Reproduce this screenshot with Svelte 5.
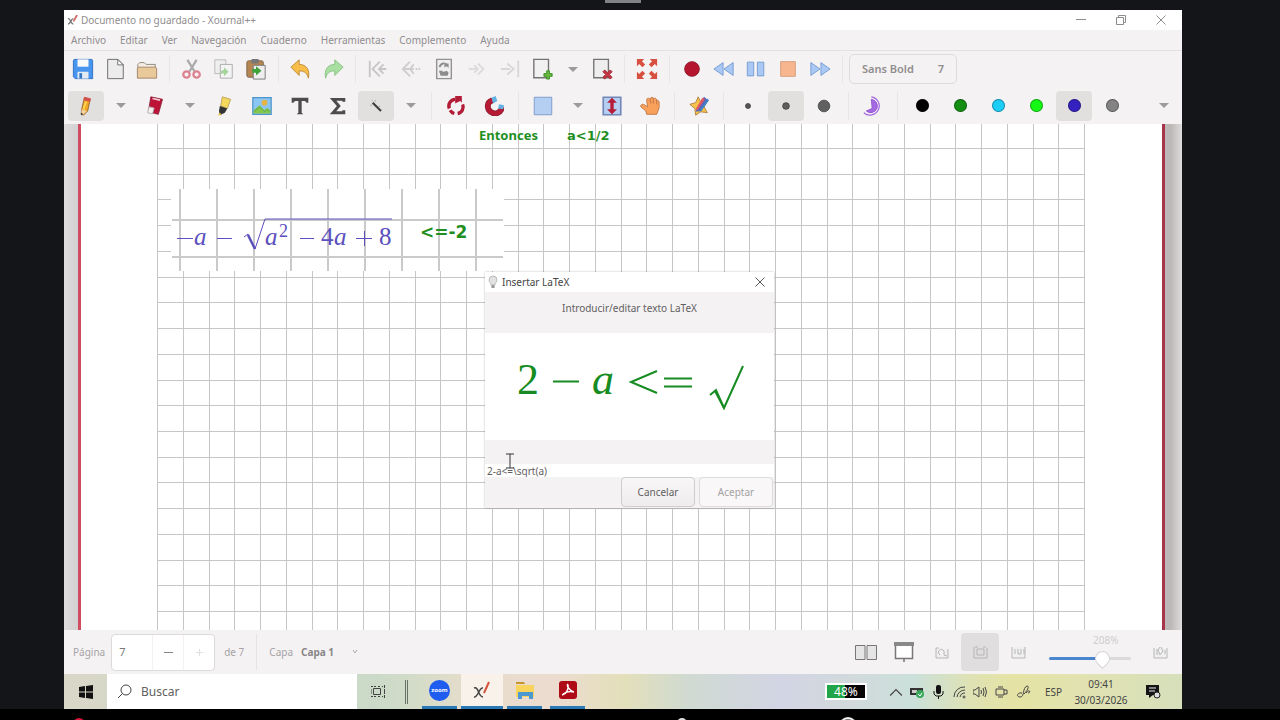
<script>
  const menus = ["Archivo", "Editar", "Ver", "Navegación", "Cuaderno", "Herramientas", "Complemento", "Ayuda"];

  // "|" is a separator, "v" a drop-down arrow
  const mainTools = ["save", "new", "open", "|", "cut", "copy", "paste", "|", "undo", "redo", "|"];
  const navTools = ["first", "prev", "goto", "next", "last", "addpage"];
  const mediaTools = ["|", "fullscreen", "|", "record", "rewind", "pause", "stop", "forward", "|"];
  const drawTools = [
    "pencil", "v", "eraser", "v", "marker", "image", "text", "sigma", "wand", "v", "|",
    "rotate", "magnet", "|", "select", "v", "vspace", "hand", "|", "star", "|",
    "dot-s", "dot-m", "dot-l", "|", "fill", "|",
  ];
  const colors = ["#000000", "#148f14", "#1ccdf7", "#15f715", "#3521c0", "#838383"];

  const disabled = ["cut", "copy", "redo", "first", "prev", "goto", "next", "last"];

  const cols = Array.from({ length: 37 }, (_, i) => Math.round(76 + (i * 927) / 36));
  const rows = Array.from({ length: 19 }, (_, i) => Math.round(24 + (i * 463) / 18));
  const bigCols = Array.from({ length: 9 }, (_, i) => 99 + i * 37);

  let activeTool = $state("wand");
  let activeSize = $state("dot-m");
  let activeColor = $state("#3521c0");
  let page = $state(7);
  let zoom = $state(69);
  let latex = $state("2-a<=\\sqrt(a)");

  function pick(name) {
    if (name.startsWith("dot-")) activeSize = name;
    else activeTool = name;
  }
</script>

{#snippet icon(name)}
  <svg class="icon" viewBox="0 0 24 24" aria-hidden="true">
    {#if name === "save"}
      <path d="M1.500 3a1.500 1.500 0 0 1 1.500-1.500h18a1.500 1.500 0 0 1 1.500 1.500v19.500h-19l-2-2z" fill="#4795ef" stroke="#2d6fc2" />
      <path d="M6 1.500h12v8H6z" fill="#f8fafc" /><path d="M6 15h12v7.500H6z" fill="#e3eaf2" /><path d="M8 16.500h3v6H8z" fill="#3578c8" />
    {:else if name === "new"}
      <path d="M4 1.500h11l6 6v15H4z" fill="#ececec" stroke="#666" /><path d="M15 1.500v6h6z" fill="#fff" stroke="#666" />
    {:else if name === "open"}
      <path d="M2 18V7l2-2h5l2 2h10v4" fill="#f5ede2" stroke="#8c8377" /><path d="M3 10h18l1.500 1v11h-21V11z" fill="#e9c899" stroke="#a1866a" />
    {:else if name === "cut"}
      <path d="M7 2l8 13M17 2L9 15" stroke="#aaa" stroke-width="2.500" fill="none" />
      <circle cx="6" cy="18" r="3.500" fill="none" stroke="#dc8291" stroke-width="2.500" /><circle cx="17" cy="18" r="3.500" fill="none" stroke="#dc8291" stroke-width="2.500" />
    {:else if name === "copy"}
      <path d="M2 2h12v15H2z" fill="#eee" stroke="#b7b7b7" /><path d="M8 7h13v15H8z" fill="#f4f4f4" stroke="#aaa" /><path d="M17 15l-5-5v3c-3 0-4 2-4 5 1-1 2-1 4-1v3z" fill="#a5d39a" />
    {:else if name === "paste"}
      <rect x="2" y="3" width="18" height="18" rx="2" fill="#b68552" stroke="#77664d" /><rect x="7" y="1" width="8" height="5" rx="1" fill="#777" />
      <path d="M9 8h13v15H9z" fill="#eee" stroke="#777" /><path d="M18 14l-6-5v3H8v4h4v3z" fill="#3da33a" />
    {:else if name === "undo"}
      <path d="M1 10l9-8v5c8 0 12 6 10 15-1-5-4-8-10-8v5z" fill="#f9be4a" stroke="#bd872e" />
    {:else if name === "redo"}
      <path d="M23 10l-9-8v5C6 7 2 13 4 22c1-5 4-8 10-8v5z" fill="#a9dfa0" stroke="#85bf80" />
    {:else if name === "first"}
      <path d="M3 3v18M14 4l-8 8 8 8M18 7l-5 5 5 5M13 12h8" fill="none" stroke="#c7c5c6" stroke-width="2" />
    {:else if name === "prev"}
      <path d="M11 4l-8 8 8 8M5 12h10m2 0h2m1 0h2M15 7l-4 5 4 5" fill="none" stroke="#cfcdce" stroke-width="2" />
    {:else if name === "goto"}
      <path d="M4 1.500h16v21H4z" fill="#efefef" stroke="#929292" stroke-width="1.500" /><path d="M7 10c2-5 6-5 8-2M7 15h3M9 18h7" fill="none" stroke="#8c8c8c" stroke-width="2" /><path d="M13 6h4v5l-2-2-3 1zM7 14l5 1 3-1 2 2-1 3H8z" fill="#8c8c8c" />
    {:else if name === "next"}
      <path d="M3 12h8M13 6l6 6-6 6M9 8l4 4-4 4" fill="none" stroke="#dddbdc" stroke-width="2" />
    {:else if name === "last"}
      <path d="M2 12h10M9 6l7 6-7 6M21 3v18" fill="none" stroke="#d8d6d7" stroke-width="2" />
    {:else if name === "addpage"}
      <path d="M2 1.500h16v20H2z" fill="#f1f1f1" stroke="#747474" stroke-width="1.500" /><path d="M14 13h3v3h3v3h-3v3h-3v-3h-3v-3h3z" transform="translate(2 1)" fill="#67b83c" stroke="#3a8f24" />
    {:else if name === "delpage"}
      <path d="M3 1.500h16v20H3z" fill="#eee" stroke="#747474" stroke-width="1.500" /><path d="M13 15l2-2 3 3 3-3 2 2-3 3 3 3-2 2-3-3-3 3-2-2 3-3z" fill="#c33743" stroke="#9d2633" />
    {:else if name === "fullscreen"}
      <path d="M1 1h8L6.500 3.500 10 7l-3 3-3.500-3.500L1 9zM23 1v8l-2.500-2.500L17 10l-3-3 3.500-3.500L15 1zM1 23v-8l2.500 2.500L7 14l3 3-3.500 3.500L9 23zM23 23h-8l2.500-2.500L14 17l3-3 3.500 3.500L23 15z" fill="#d8503f" />
    {:else if name === "record"}
      <circle cx="12" cy="12" r="8" fill="#b5152e" stroke="#8d1727" />
    {:else if name === "rewind"}
      <path d="M11 5v14L1 12zM22 5v14l-10-7z" fill="#a9c8f4" stroke="#749bd0" />
    {:else if name === "pause"}
      <path d="M2.500 4.500h7v15h-7zM13.500 4.500h7v15h-7z" fill="#a9c8f4" stroke="#749bd0" />
    {:else if name === "stop"}
      <path d="M4 4h16v16H4z" fill="#f8b68f" stroke="#d39b78" />
    {:else if name === "forward"}
      <path d="M2 5v14l10-7zM13 5v14l10-7z" fill="#a9c8f4" stroke="#749bd0" />
    {:else if name === "pencil"}
      <path d="M10 2l7 2-3 14-5 5-3-1 1-7z" fill="#f2a825" stroke="#8d5d27" /><path d="M10 1l8 2-1 4-8-2z" fill="#d3504b" /><path d="M7 16l6 2-5 5-2-1z" fill="#f3d2a5" /><path d="M6 20l3 2-3 1z" fill="#333" /><path d="M12 7L9 16" stroke="#ffda59" stroke-width="2" />
    {:else if name === "eraser"}
      <path d="M7 1l14 3-5 18-12-3z" fill="#bd1336" stroke="#872039" /><path d="M5 13l6 1.500-2 7L3 20z" fill="#f5f1f1" stroke="#aaa" /><path d="M9 3l9 2" stroke="#f0cdd4" stroke-width="2" />
    {:else if name === "marker"}
      <path d="M10 1l10 3-4 11-8-3z" fill="#f4d85e" stroke="#b39b52" /><path d="M7 12l9 3-3 5-6 3-1-5z" fill="#333" /><path d="M8 20l-4 3h4z" fill="#f0cf32" />
    {:else if name === "image"}
      <path d="M1 2h22v20H1z" fill="#8bc6f4" stroke="#4d94c9" stroke-width="1.500" /><circle cx="15" cy="8" r="3.500" fill="#e6b344" /><path d="M2 17l7-6 6 6 3-3 4 3v4H2z" fill="#85c64c" /><path d="M2 19l7-6 6 6 3-3 4 3" fill="none" stroke="#57a34c" />
    {:else if name === "text"}
      <path d="M2 2h20v6h-2l-2-2h-4v14l2 2H8l2-2V6H6L4 8H2z" fill="#4c4c4c" />
    {:else if name === "sigma"}
      <path d="M19 7V4H6l7 8-7 8h13v-3" stroke="#4c4c4c" stroke-width="3.500" fill="none" />
    {:else if name === "wand"}
      <path d="M8 8l10 10" stroke="#3e3e3e" stroke-width="2.500" /><path d="M11 5v2M5 11h2M7 5l1 1M17 12l-2 1" stroke="#999" />
    {:else if name === "rotate"}
      <path d="M4 15a8 8 0 0 1 7-11M20 10a8 8 0 0 1-6 11M10 21a8 8 0 0 1-5-4" stroke="#b31c37" stroke-width="4" fill="none" /><path d="M11 0h8v8l-2-2-6 3z" fill="#b31c37" />
    {:else if name === "magnet"}
      <path d="M10 5c-8 3-6 11-2 14 5 4 12 2 14-6" fill="none" stroke="#8c2032" stroke-width="7" /><path d="M10 5c-8 3-6 11-2 14 5 4 12 2 14-6" fill="none" stroke="#b71a34" stroke-width="5" /><path d="M9 2l5-2 2 6-5 3zM18 10l6 1-1 5-6-1z" fill="#62b1e3" />
    {:else if name === "select"}
      <path d="M1.500 1.500h21v21h-21z" fill="#b5cff3" stroke="#7193c5" />
    {:else if name === "vspace"}
      <path d="M1.500 1.500h21v21h-21z" fill="#b5cff3" stroke="#7187b5" stroke-width="2" /><path d="M12 2l6 6h-4v8h4l-6 6-6-6h4V8H6z" fill="#b41c37" />
    {:else if name === "hand"}
      <path d="M8 22l-1-4-6-5c-1-3 3-4 5-2l3 2-1-8c0-3 3-3 4-1l1-2c2-1 3 0 3 1 2-1 4 0 4 2 2 0 3 1 3 3v6l-3 8z" fill="#f9a05b" stroke="#ba7040" /><path d="M12 4l1 5m3-6v6m4-4v5" fill="none" stroke="#ba7040" />
    {:else if name === "star"}
      <path d="M11 1l3 6 8-1-4 7 4 7-8-1-6 4-1-8-6-5 7-2z" fill="#f6c44b" stroke="#a87737" /><path d="M18 1l5 4-9 13-6 1 2-6z" fill="#5a67b7" /><path d="M16 2l3 2-9 13-2-1z" fill="#e65861" /><path d="M22 3l2 2-9 13-3 1z" fill="#4084c5" />
    {:else if name === "dot-s"}
      <circle cx="12" cy="12" r="3" fill="#555" stroke="#444" />
    {:else if name === "dot-m"}
      <circle cx="12" cy="12" r="4" fill="#5e5e5e" stroke="#3d3d3d" />
    {:else if name === "dot-l"}
      <circle cx="12" cy="12" r="7" fill="#606060" stroke="#484848" />
    {:else if name === "fill"}
      <path d="M10 4a8 8 0 1 1-6 14l7-3z" fill="#a56ae3" stroke="#8d4ccc" /><path d="M10 1a11 11 0 1 1-9 19" fill="none" stroke="#a56ae3" stroke-width="1.500" />
    {/if}
  </svg>
{/snippet}

{#snippet tools(list)}
  {#each list as name}
    {#if name === "|"}
      <span class="sep"></span>
    {:else if name === "v"}
      <button class="caret" aria-label="Más opciones"></button>
    {:else}
      <button
        class="tool"
        class:active={name === activeTool || name === activeSize || name === "pencil"}
        disabled={disabled.includes(name)}
        aria-label={name}
        onclick={() => pick(name)}>{@render icon(name)}</button>
    {/if}
  {/each}
{/snippet}

<div class="screen">
  <div class="top-strip"><span class="grip"></span></div>

  <main class="window">
    <header class="titlebar">
      <svg class="logo" viewBox="0 0 12 12" aria-hidden="true">
        <path d="M1 4c3-1 3 6 6 6M7 4C4 4 4 10 1 10" fill="none" stroke="#777" stroke-width="1.500" /><path d="M7 7l4-7" stroke="#d36a6a" stroke-width="2" />
      </svg>
      <h1>Documento no guardado - Xournal++</h1>
      <div class="win-buttons">
        <button aria-label="Minimizar"><svg viewBox="0 0 10 10"><path d="M0 4.500h10" /></svg></button>
        <button aria-label="Restaurar"><svg viewBox="0 0 10 10"><path d="M.5 2.500h7v7h-7zM2.500 2.500v-2h7v7h-2" /></svg></button>
        <button aria-label="Cerrar"><svg viewBox="0 0 10 10"><path d="M.5.5l9 9M9.500.5l-9 9" /></svg></button>
      </div>
    </header>

    <nav class="menubar">
      {#each menus as menu}
        <button>{menu}</button>
      {/each}
    </nav>

    <div class="toolbar main">
      {@render tools(mainTools)}
      <div class="nav-tools">{@render tools(navTools)}</div>
      {@render tools(["v", "delpage"])}
      {@render tools(mediaTools)}
      <button class="font"><span>Sans Bold</span><span>7</span></button>
    </div>

    <div class="toolbar draw">
      {@render tools(drawTools)}
      {#each colors as color}
        <button class="tool" class:active={color === activeColor} aria-label={color} onclick={() => (activeColor = color)}>
          <span class="swatch" style="background: {color}"></span>
        </button>
      {/each}
      <button class="caret end" aria-label="Más colores"></button>
    </div>

    <section class="canvas">
      <svg class="paper">
        <g class="grid">
          {#each cols as x}
            <path d="M{x}.5 0V520" />
          {/each}
          {#each rows as y}
            <path d="M76 {y}.5H1003" />
          {/each}
        </g>
        <text class="note" x="398" y="16">Entonces</text>
        <text class="note wide" x="486" y="16">a&lt;1/2</text>

        <rect x="90" y="65" width="333" height="82" fill="#fff" />
        <g class="grid big">
          {#each bigCols as x}
            <path d="M{x} 65V147" />
          {/each}
          <path d="M91 96H422M91 133H422" />
        </g>
        <g class="formula">
          <path d="M96 114.500h16M136 114.500h15M219 114.500h14M275 114.500h16M283.500 107v15" />
          <path d="M163 113l4-3 7 15 10-30H311" />
          <path d="M167 111l7 14" stroke-width="2.500" />
          <text class="it" x="113" y="121">a</text>
          <text class="it" x="184" y="121">a</text>
          <text class="sup" x="198" y="113">2</text>
          <text x="240" y="121">4</text>
          <text class="it" x="253" y="121">a</text>
          <text x="298" y="121">8</text>
        </g>
        <text class="note large" x="339" y="114">&lt;=-2</text>
      </svg>

      <div class="dialog" role="dialog" aria-label="Insertar LaTeX">
        <div class="dialog-title">
          <svg class="bulb" viewBox="0 0 10 14" aria-hidden="true"><path d="M3 10c0-2-2-3-2-5a4 4 0 0 1 8 0c0 2-2 3-2 5zM3.500 12h3" fill="#e2e2e2" stroke="#bbb" /><path d="M3.500 10h3v3h-3z" fill="#999" /></svg>
          <h2>Insertar LaTeX</h2>
          <button class="close" aria-label="Cerrar"><svg viewBox="0 0 10 10"><path d="M.5.5l9 9M9.500.5l-9 9" /></svg></button>
        </div>
        <label class="prompt" for="latex">Introducir/editar texto LaTeX</label>
        <svg class="preview" viewBox="0 0 289 107" role="img" aria-label="Vista previa">
          <text x="32" y="61">2</text>
          <text class="it" x="107" y="61">a</text>
          <path d="M68 48.500h26M172 38l-26 11 26 11M179 45.500h28M179 53.500h28" />
          <path d="M225 62l6-5 8 18 19-42" /><path d="M230 58l9 17" stroke-width="4" />
        </svg>
        <div class="gap"></div>
        <input id="latex" type="text" bind:value={latex} />
        <svg class="ibeam" viewBox="0 0 10 16" aria-hidden="true"><path d="M1 1h8M5 1v14M1 15h8" /></svg>
        <div class="actions">
          <button>Cancelar</button>
          <button disabled>Aceptar</button>
        </div>
      </div>
    </section>

    <footer class="status">
      <label for="page">Página</label>
      <div class="spin">
        <input id="page" type="text" bind:value={page} />
        <button aria-label="Anterior" onclick={() => (page -= 1)}><svg viewBox="0 0 10 10"><path d="M0 5h10" /></svg></button>
        <button class="off" aria-label="Siguiente" disabled><svg viewBox="0 0 10 10"><path d="M1 5h8M5 1v8" /></svg></button>
      </div>
      <span class="total">de 7</span>
      <span class="layer">Capa</span>
      <button class="layer-name">Capa 1 <svg viewBox="0 0 6 6"><path d="M1 1l2 3 2-3" /></svg></button>
      <div class="views">
        <button aria-label="Dos páginas"><svg viewBox="0 0 22 22"><path d="M.5 4.500h9.500v14H.5zM12 4.500h9.500v14H12z" fill="#e6e5e5" stroke="#777" /></svg></button>
        <button aria-label="Presentación"><svg viewBox="0 0 22 22"><path d="M2.500 3v14.500h17V3M11 17.500V21" fill="#fff" stroke="#777" stroke-width="1.500" /><path d="M1 1h20v4H1z" fill="#888" /></svg></button>
        <button aria-label="Reducir"><svg viewBox="0 0 22 22"><path d="M5 7h3M5 7v10h12V8M9 14l-2-3 3-3 3 2v4l3 1" fill="#efefef" stroke="#b8b6b7" /></svg></button>
        <button class="on" aria-label="Ajustar"><svg viewBox="0 0 22 22"><path d="M5 6v11h13V7M8 8h7v6H8zM6 6h3m5 0h3" fill="none" stroke="#b6b4b5" /></svg></button>
        <button aria-label="Tamaño real"><svg viewBox="0 0 22 22"><path d="M5 6v11h13V6M8 8v5m3-5v5h3V8m3 0v5" fill="#f0f0f0" stroke="#b8b6b7" /></svg></button>
      </div>
      <div class="zoom">
        <output for="zoom">208%</output>
        <input id="zoom" type="range" min="0" max="100" bind:value={zoom} style="--fill: {zoom}%" aria-label="Zoom" />
      </div>
      <button class="zoom-in" aria-label="Ampliar"><svg viewBox="0 0 22 22"><path d="M5 7v10h13V7M8 8v6m3-8-2 3 2 5 3-4-2-4M16 9v4" fill="#f0f0f0" stroke="#b8b6b7" /></svg></button>
    </footer>

    <div class="taskbar">
      <button class="start" aria-label="Inicio"><svg viewBox="0 0 14 14"><path d="M0 2l6-1v5.500H0zM7 1l7-1v6.500H7zM0 7.500h6V13l-6-1zM7 7.500h7V14l-7-1z" /></svg></button>
      <label class="search">
        <svg viewBox="0 0 15 15"><circle cx="9" cy="6" r="5" /><path d="M5.500 9.500L1 14" /></svg>
        <input type="text" placeholder="Buscar" />
      </label>
      <button class="view" aria-label="Vista de tareas"><svg viewBox="0 0 15 15"><path d="M2.500 4.500h7v6h-7zM0 2.500h2m1 0h2m2 0h2m2 0h1M0 12.500h2m1 0h2m2 0h2m2 0h1M13.500 1v3m0 1v5m0 1v3M0 5v5" /></svg></button>
      <span class="bars"></span>
      <button class="app" aria-label="Zoom"><span class="zoom-logo">zoom</span></button>
      <button class="app current" aria-label="Xournal++"><svg viewBox="0 0 20 20"><path d="M2 8c5-2 4 9 9 9M11 8C7 7 6 18 2 17" fill="none" stroke="#444" stroke-width="1.500" /><path d="M12 13l5-11" stroke="#d5523c" stroke-width="2" /></svg></button>
      <button class="app" aria-label="Explorador"><svg viewBox="0 0 20 20"><path d="M1 2h8l1 2H1z" fill="#c7952b" /><path d="M1 5h18v12H1z" fill="#f8d45c" /><path d="M3 12h15v7h-4v-3H7v3H3z" fill="#4b98d2" /></svg></button>
      <button class="app" aria-label="Acrobat"><svg viewBox="0 0 20 20"><rect x="1" y="1" width="18" height="18" rx="3" fill="#ae0b16" /><path d="M10 4c-2 2 3 8 6 8M10 5c1 5-2 9-6 10M5 14c3-2 7-3 11-2" fill="none" stroke="#fff" stroke-width="1.500" /></svg></button>
      <div class="tray">
        <span class="battery">48%</span>
        <svg class="up" viewBox="0 0 12 12"><path d="M1 9l5-5 5 5" /></svg>
        <svg viewBox="0 0 14 14"><path d="M0 3h13v7H0z" fill="#333" stroke="none" /><path d="M2 5h5v3H2z" fill="#ccc" stroke="none" /><circle cx="10" cy="9" r="4" fill="#39a85b" stroke="none" /><path d="M8 9l2 2 2-3" stroke="#fff" /></svg>
        <svg viewBox="0 0 14 14"><rect x="5" y="0" width="5" height="9" rx="2" fill="#111" stroke="none" /><path d="M3 6v3l2 2h5l2-2V6M7.500 11v3" stroke="#111" /></svg>
        <svg viewBox="0 0 14 14"><path d="M2 12A10 10 0 0 1 13 2M5 12a8 8 0 0 1 8-7M8 12a5 5 0 0 1 5-4" /><circle cx="12" cy="12" r="1" /></svg>
        <svg viewBox="0 0 14 14"><path d="M0 5h2l4-3v10L2 9H0zM8 5q1 2 0 4M10 3q2 4 0 8M12 2q3 5 0 10" /></svg>
        <svg viewBox="0 0 14 14"><path d="M2 4h8v6H2zM10 5h3v4h-3M4 2h5M4 12h5" /></svg>
        <svg class="pen" viewBox="0 0 14 14"><path d="M5 8c-5-1-6 4-2 4 5 0 2-9 7-11 3 0 0 5-3 8M9 8c4-5 5 0 2 0" /></svg>
        <span class="lang">ESP</span>
        <time class="clock"><span>09:41</span><span>30/03/2026</span></time>
        <svg class="notes" viewBox="0 0 16 16"><path d="M1 1h13v10H8l-4 3v-3H1z" fill="#151515" stroke="none" /><path d="M4 4h7M4 7h6" stroke="#eee" /><circle cx="12" cy="11" r="3" fill="#ddd" stroke="#222" /></svg>
      </div>
    </div>
  </main>

  <div class="bottom-strip">
    <svg class="seek" viewBox="0 0 11 11" aria-hidden="true"><circle cx="5" cy="15" r="6" fill="#d8163a" /></svg>
    <svg viewBox="0 0 20 11" aria-hidden="true"><circle cx="10" cy="14" r="5" fill="#ddd" /></svg>
    <svg viewBox="0 0 20 11" aria-hidden="true"><circle cx="10" cy="17" r="8" fill="#777" stroke="#eee" stroke-width="2" /></svg>
  </div>
</div>

<style>
  :global(body) {
    margin: 0;
    background: #141518;
  }

  .screen {
    display: flex;
    flex-direction: column;
    height: 100vh;
    overflow: hidden;
    font-family: "Noto Sans", sans-serif;
    font-size: 10px;
    line-height: 16px;
    color: #8f8d8e;
  }

  button,
  input {
    font: inherit;
    color: inherit;
    border: none;
    background: none;
    padding: 0;
    margin: 0;
    box-sizing: border-box;
    outline: none;
  }

  button svg,
  .tray svg {
    display: block;
  }

  h1,
  h2 {
    margin: 0;
    font-size: 10px;
    font-weight: 400;
  }

  .top-strip {
    flex: none;
    height: 10px;
    padding-left: 605px;
  }

  .grip {
    display: block;
    width: 36px;
    height: 3px;
    background: #828284;
  }

  .window {
    flex: 1;
    min-height: 0;
    display: flex;
    flex-direction: column;
    margin: 0 98px 0 64px;
    background: #f5f2f4;
  }

  .titlebar {
    display: flex;
    align-items: center;
    height: 20px;
    padding: 0 16px 0 3px;
    background: #fff;
  }

  .logo {
    width: 11px;
    height: 11px;
    margin-right: 3px;
  }

  .titlebar h1 {
    flex: 1;
  }

  .win-buttons {
    display: flex;
    gap: 30px;
  }

  .win-buttons svg,
  .close svg {
    width: 10px;
    height: 10px;
    fill: none;
    stroke: #8d8d8d;
  }

  .menubar {
    display: flex;
    gap: 14px;
    height: 20px;
    padding-left: 7px;
    border-bottom: 1px solid #e3e0e2;
  }

  .toolbar {
    display: flex;
    align-items: center;
    height: 36px;
    padding-left: 3px;
  }

  .toolbar.draw {
    height: 37px;
  }

  .nav-tools {
    display: flex;
    gap: 1px;
    margin-right: 1px;
  }

  .tool {
    display: flex;
    align-items: center;
    justify-content: center;
    flex: none;
    width: 32px;
    height: 30px;
    border-radius: 4px;
  }

  .draw .tool {
    width: 36px;
    margin: 0 1px;
  }

  .tool.active {
    background: #e1e0df;
  }

  .icon {
    width: 22px;
    height: 22px;
  }

  .draw .icon {
    width: 20px;
    height: 20px;
  }

  .sep {
    flex: none;
    width: 1px;
    height: 28px;
    margin: 0 6px;
    background: #e9e6e8;
  }

  .draw .sep {
    margin: 0 5px;
  }

  .caret {
    flex: none;
    width: 26px;
    height: 30px;
  }

  .draw .caret {
    width: 31px;
  }

  .caret::after {
    content: "";
    display: block;
    width: 0;
    margin: 0 auto;
    border: 5px solid transparent;
    border-top-color: #9c9a9b;
    border-bottom: none;
  }

  .draw .caret.end {
    margin-left: auto;
    margin-right: 3px;
  }

  .font {
    display: flex;
    justify-content: space-between;
    align-items: center;
    width: 108px;
    height: 30px;
    padding: 0 12px;
    border: 1px solid #dedbdd;
    border-radius: 5px;
    font-size: 11px;
    font-weight: 600;
  }

  .swatch {
    width: 13px;
    height: 13px;
    border-radius: 50%;
    box-shadow: inset 0 0 0 1px #0005;
  }

  .canvas {
    position: relative;
    flex: 1;
    min-height: 0;
    display: flex;
    padding: 0 17px 0 14px;
    background: linear-gradient(90deg, #dedcdc, #d2d0d0 14px, #dedcdc 50%, #bcb8b8 99%, #dedcdc);
  }

  .paper {
    flex: 1;
    min-width: 0;
    height: 100%;
    background: #fff;
    border-left: 3px solid #d04c60;
    border-right: 3px solid #a8344a;
  }

  .grid {
    fill: none;
    stroke: #c6c6c6;
  }

  .big {
    stroke: #cacaca;
    stroke-width: 2;
  }

  .note {
    font-size: 13px;
    font-weight: 700;
    fill: #1f8f1f;
  }

  .wide,
  .large {
    font-family: "DejaVu Sans", sans-serif;
  }

  .large {
    font-size: 17px;
  }

  .formula {
    font-family: "Liberation Serif", serif;
    font-size: 25px;
  }

  .formula text {
    fill: #5b50bd;
  }

  .formula .sup {
    font-size: 18px;
  }

  .formula path {
    fill: none;
    stroke: #5b50bd;
  }

  .it {
    font-style: italic;
  }

  .dialog {
    position: absolute;
    left: 421px;
    top: 148px;
    width: 289px;
    display: flex;
    flex-direction: column;
    background: #f5f2f4;
    box-shadow: 0 0 2px #0004;
    color: #626061;
  }

  .dialog-title {
    display: flex;
    align-items: center;
    gap: 4px;
    height: 20px;
    padding: 0 9px 0 3px;
    background: #fff;
    color: #444;
  }

  .dialog-title h2 {
    flex: 1;
  }

  .close svg {
    stroke: #555;
  }

  .bulb {
    width: 10px;
    height: 14px;
  }

  .prompt {
    height: 33px;
    padding-top: 8px;
    text-align: center;
  }

  .preview {
    background: #fff;
    height: 107px;
    font-family: "Liberation Serif", serif;
    font-size: 44px;
    fill: #178c22;
  }

  .preview path {
    fill: none;
    stroke: #178c22;
    stroke-width: 2;
  }

  .gap {
    height: 24px;
  }

  .dialog input {
    height: 13px;
    padding-left: 2px;
    background: #fff;
  }

  .ibeam {
    position: absolute;
    left: 20px;
    top: 181px;
    width: 10px;
    height: 16px;
    fill: none;
    stroke: #333;
  }

  .actions {
    display: flex;
    justify-content: flex-end;
    gap: 4px;
    padding: 0 1px 1px;
  }

  .actions button {
    width: 74px;
    height: 30px;
    border: 1px solid #cfcccd;
    border-radius: 4px;
    background: linear-gradient(#f8f6f7, #efecee);
  }

  .actions button:disabled {
    color: #a4a2a3;
    border-color: #dddadb;
    background: #f9f7f8;
  }

  .status {
    display: flex;
    align-items: center;
    height: 44px;
    padding: 0 11px 0 9px;
    color: #a5a3a4;
  }

  .spin {
    display: flex;
    height: 37px;
    width: 104px;
    margin: 0 9px 0 6px;
    box-sizing: border-box;
    border: 1px solid #dcdadb;
    border-radius: 4px;
    background: #fff;
    color: #777;
  }

  .spin input {
    width: 40px;
    padding-left: 7px;
    font-size: 11px;
  }

  .spin button {
    flex: 1;
    display: flex;
    align-items: center;
    justify-content: center;
    border-left: 1px solid #f3f1f2;
  }

  .spin svg {
    width: 9px;
    height: 9px;
    stroke: #777;
  }

  .spin .off svg {
    stroke: #ddd;
  }

  .layer {
    margin: 0 8px 0 12px;
    padding-left: 12px;
    line-height: 36px;
    border-left: 1px solid #e6e3e5;
  }

  .layer-name {
    display: flex;
    align-items: center;
    gap: 18px;
    font-weight: 700;
    color: #888687;
  }

  .layer-name svg {
    width: 6px;
    height: 6px;
    fill: none;
    stroke: #aaa;
  }

  .views {
    display: flex;
    margin-left: auto;
    margin-right: 12px;
  }

  .views button {
    display: flex;
    align-items: center;
    justify-content: center;
    width: 38px;
    height: 38px;
    border-radius: 4px;
  }

  .views svg,
  .zoom-in svg {
    width: 22px;
    height: 22px;
  }

  .views .on {
    background: #e0dedf;
  }

  .zoom {
    display: flex;
    flex-direction: column;
    width: 82px;
    height: 40px;
    margin-right: 18px;
    color: #cfcdce;
  }

  .zoom output {
    padding-left: 44px;
  }

  .zoom input {
    appearance: none;
    width: 82px;
    height: 20px;
  }

  .zoom input::-webkit-slider-runnable-track {
    height: 3px;
    border-radius: 2px;
    background: linear-gradient(90deg, #4a86d0 var(--fill), #dcdadb var(--fill));
  }

  .zoom input::-webkit-slider-thumb {
    appearance: none;
    width: 15px;
    height: 15px;
    margin-top: -6px;
    border: 1px solid #d6d4d5;
    border-radius: 50% 50% 0 50%;
    background: #fff;
    transform: rotate(45deg);
  }

  .taskbar {
    display: flex;
    height: 35px;
    color: #444;
    background: linear-gradient(90deg, #d9d7c8, #cbdac8 28%, #d2dcc8 31%, #e6dccb 36%, #ecdcd0 44%, #e3dfba 50%, #d0dad2 56%, #d2d5e4 64%, #d2d9dc 70%, #cbe0da 76%, #dee2b4 81%, #e5e3a4 85%, #e0e2b2 92%, #d6dfbb);
  }

  .start {
    width: 43px;
    display: flex;
    align-items: center;
    justify-content: center;
  }

  .start svg {
    width: 14px;
    height: 14px;
    fill: #111;
  }

  .search {
    display: flex;
    align-items: center;
    gap: 9px;
    width: 250px;
    box-sizing: border-box;
    padding-left: 10px;
    background: #fff;
    font-size: 12px;
  }

  .search svg {
    flex: none;
    width: 15px;
    height: 15px;
    fill: none;
    stroke: #444;
  }

  .search input {
    width: 100%;
    min-width: 0;
  }

  .search input::placeholder {
    color: #606060;
    opacity: 1;
  }

  .view {
    width: 43px;
    display: flex;
    align-items: center;
    justify-content: center;
  }

  .view svg {
    width: 15px;
    height: 15px;
    fill: none;
    stroke: #444;
  }

  .bars {
    align-self: center;
    width: 1px;
    height: 24px;
    margin: 0 10px 0 5px;
    border: solid #68746a;
    border-width: 0 1px;
  }

  .app {
    display: flex;
    align-items: center;
    justify-content: center;
    width: 35px;
    margin: 0 4px;
    border-bottom: 3px solid #2a79b5;
  }

  .app svg {
    width: 20px;
    height: 20px;
  }

  .current {
    width: 42px;
    margin: 0;
    background: #f8f2ea;
  }

  .zoom-logo {
    width: 21px;
    height: 21px;
    border-radius: 50%;
    background: #1f5cf0;
    color: #fff;
    font-size: 6px;
    font-weight: 700;
    line-height: 20px;
  }

  .tray {
    display: flex;
    align-items: center;
    gap: 7px;
    margin-left: auto;
    padding-right: 21px;
  }

  .tray svg {
    width: 14px;
    height: 14px;
    fill: none;
    stroke: #444;
  }

  .battery {
    width: 38px;
    height: 13px;
    margin-right: 15px;
    border: 2px solid #fff;
    background: linear-gradient(90deg, #22a548 48%, #050505 48%);
    color: #fff;
    font-size: 12px;
    line-height: 13px;
    text-align: center;
  }

  .tray .pen {
    margin-left: 2px;
  }

  .lang {
    margin-left: 7px;
  }

  .clock {
    display: flex;
    flex-direction: column;
    width: 64px;
    text-align: center;
  }

  .tray .notes {
    width: 16px;
    height: 16px;
    margin-left: 5px;
  }

  .bottom-strip {
    flex: none;
    display: flex;
    height: 11px;
    background: #000;
  }

  .bottom-strip svg {
    width: 20px;
    height: 11px;
    margin-right: 146px;
  }

  .bottom-strip .seek {
    width: 11px;
    margin-left: 74px;
    margin-right: 587px;
  }
</style>
